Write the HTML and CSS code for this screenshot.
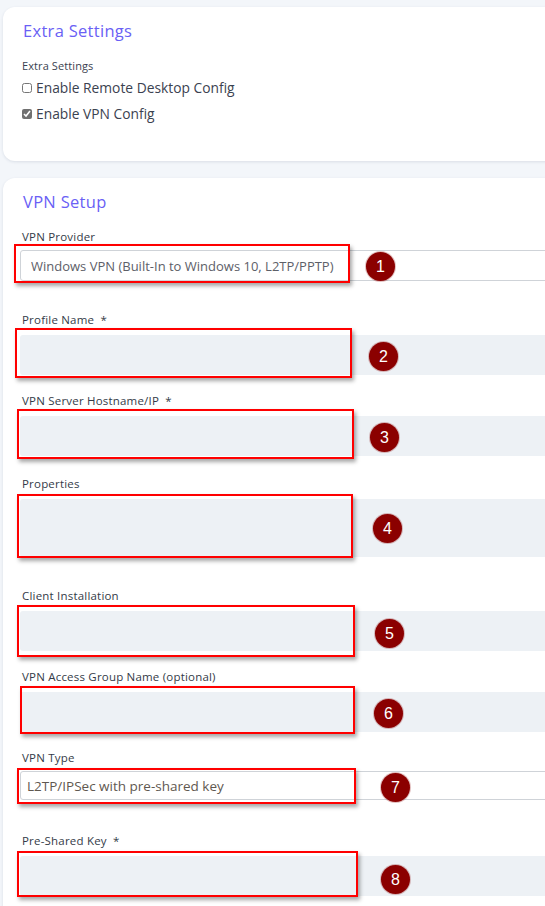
FILE: index.html
```html
<!DOCTYPE html>
<html lang="en">
<head>
<meta charset="utf-8">
<title>VPN Setup</title>
<link rel="stylesheet" href="styles.css">
</head>
<body>
<div class="page">
  <section class="card card-extra">
    <h2 class="card-title">Extra Settings</h2>
    <div class="group-label">Extra Settings</div>
    <label class="check-row"><input type="checkbox" class="check"> Enable Remote Desktop Config</label>
    <label class="check-row"><input type="checkbox" class="check" checked> Enable VPN Config</label>
  </section>

  <section class="card card-vpn">
    <h2 class="card-title">VPN Setup</h2>

    <div class="field gap-lg">
      <label class="field-label tight">VPN Provider</label>
      <div class="control">
        <select class="select"><option>Windows VPN (Built-In to Windows 10, L2TP/PPTP)</option></select>
        <span class="anno-box anno-1"></span>
        <span class="anno-num num-1">1</span>
      </div>
    </div>

    <div class="field">
      <label class="field-label">Profile Name <span class="req">*</span></label>
      <div class="control">
        <input type="text" class="input">
        <span class="anno-box anno-2"></span>
        <span class="anno-num num-2">2</span>
      </div>
    </div>

    <div class="field gap-md">
      <label class="field-label">VPN Server Hostname/IP <span class="req">*</span></label>
      <div class="control">
        <input type="text" class="input">
        <span class="anno-box anno-3"></span>
        <span class="anno-num num-3">3</span>
      </div>
    </div>

    <div class="field gap-lg">
      <label class="field-label">Properties</label>
      <div class="control">
        <textarea class="input textarea"></textarea>
        <span class="anno-box anno-4"></span>
        <span class="anno-num num-4">4</span>
      </div>
    </div>

    <div class="field">
      <label class="field-label">Client Installation</label>
      <div class="control">
        <input type="text" class="input">
        <span class="anno-box anno-5"></span>
        <span class="anno-num num-5">5</span>
      </div>
    </div>

    <div class="field">
      <label class="field-label">VPN Access Group Name (optional)</label>
      <div class="control">
        <input type="text" class="input">
        <span class="anno-box anno-6"></span>
        <span class="anno-num num-6">6</span>
      </div>
    </div>

    <div class="field gap-xl">
      <label class="field-label tight">VPN Type</label>
      <div class="control">
        <select class="select select-sm"><option>L2TP/IPSec with pre-shared key</option></select>
        <span class="anno-box anno-7"></span>
        <span class="anno-num num-7">7</span>
      </div>
    </div>

    <div class="field">
      <label class="field-label">Pre-Shared Key <span class="req">*</span></label>
      <div class="control">
        <input type="password" class="input">
        <span class="anno-box anno-8"></span>
        <span class="anno-num num-8">8</span>
      </div>
    </div>
  </section>
</div>
</body>
</html>
```

FILE: styles.css
```css
* { box-sizing: border-box; }

html, body {
  margin: 0;
  padding: 0;
  background: #f3f6fa;
  overflow: hidden;
  font-family: "Open Sans", "Liberation Sans", sans-serif;
  color: #3b4250;
}

.page {
  padding: 7px 0 0 3px;
  display: flex;
  flex-direction: column;
  gap: 17px;
  width: 600px;
}

.card {
  background: #ffffff;
  border-radius: 12px;
  box-shadow: 0 1px 3px rgba(40, 60, 90, 0.12);
  padding: 13px 0 0 19px;
}

.card-extra { padding-bottom: 31px; }
.card-vpn { padding-left: 17px; padding-bottom: 20px; }

.card-title {
  margin: 0 0 17px 1px;
  font-size: 16.5px;
  line-height: 22px;
  font-weight: 500;
  color: #6a5ff5;
  letter-spacing: 0.3px;
}
.card-vpn .card-title { margin-left: 3px; }

.group-label {
  font-size: 11px;
  line-height: 14px;
  font-weight: 500;
  margin-bottom: 5px;
  color: #3b4250;
  letter-spacing: 0.1px;
}

.check-row {
  display: flex;
  align-items: center;
  gap: 4px;
  font-size: 13.8px;
  line-height: 20px;
  color: #3b4250;
  margin-bottom: 6px;
}

.check {
  margin: 0;
  width: 10px;
  height: 10px;
  accent-color: #707070;
}

.field {
  display: flex;
  flex-direction: column;
  margin-bottom: 19px;
}
.field.gap-md { margin-bottom: 21px; }
.field.gap-lg { margin-bottom: 32px; }
.field.gap-xl { margin-bottom: 34px; }

.field-label {
  font-size: 11.5px;
  line-height: 14px;
  font-weight: 500;
  color: #343b48;
  letter-spacing: 0.2px;
  margin: 0 0 8px 2px;
}
.field-label.tight { margin-bottom: 6px; }

.req { margin-left: 3px; }

.control {
  position: relative;
}

.input {
  display: block;
  width: 100%;
  height: 40px;
  border: none;
  border-radius: 3px;
  background: #edf1f5;
  font: inherit;
}
.textarea { height: 58px; resize: none; }

.select {
  display: block;
  width: 100%;
  height: 31px;
  appearance: none;
  border: 1px solid #cfd3d8;
  border-radius: 3px;
  background: #ffffff;
  color: #5d6068;
  font-family: "Open Sans", "Liberation Sans", sans-serif;
  font-size: 13px;
  padding: 0 10px;
}
.select-sm { height: 29px; padding-left: 6px; font-size: 13.5px; color: #5f5850; }

/* annotation overlays */
.anno-box {
  position: absolute;
  border: 2px solid #ff0000;
  box-shadow: 2px 3px 4px rgba(0, 0, 0, 0.35);
  pointer-events: none;
}
.anno-1 { left: -6px; top: -6px; width: 336px; height: 39px; }
.anno-2 { left: -5px; top: -7px; width: 337px; height: 50px; }
.anno-3 { left: -3px; top: -7px; width: 337px; height: 50px; }
.anno-4 { left: -3px; top: -5px; width: 336px; height: 64px; }
.anno-5 { left: -3px; top: -6px; width: 338px; height: 52px; }
.anno-6 { left: 0; top: -6px; width: 335px; height: 48px; }
.anno-7 { left: -3px; top: -3px; width: 339px; height: 36px; }
.anno-8 { left: -3px; top: -5px; width: 341px; height: 46px; }

.anno-num {
  position: absolute;
  width: 29px;
  height: 29px;
  border-radius: 50%;
  background: #8b0000;
  color: #ffffff;
  font-family: "Liberation Sans", Arial, sans-serif;
  font-size: 16px;
  line-height: 29px;
  text-align: center;
  box-shadow: 0 0 0 1px rgba(139, 0, 0, 0.25);
}
.num-1 { left: 346px; top: 2px; }
.num-2 { left: 349px; top: 7px; }
.num-3 { left: 350px; top: 7px; }
.num-4 { left: 353px; top: 15px; }
.num-5 { left: 355px; top: 8px; }
.num-6 { left: 354px; top: 7px; }
.num-7 { left: 361px; top: 2px; }
.num-8 { left: 361px; top: 9px; }
```
